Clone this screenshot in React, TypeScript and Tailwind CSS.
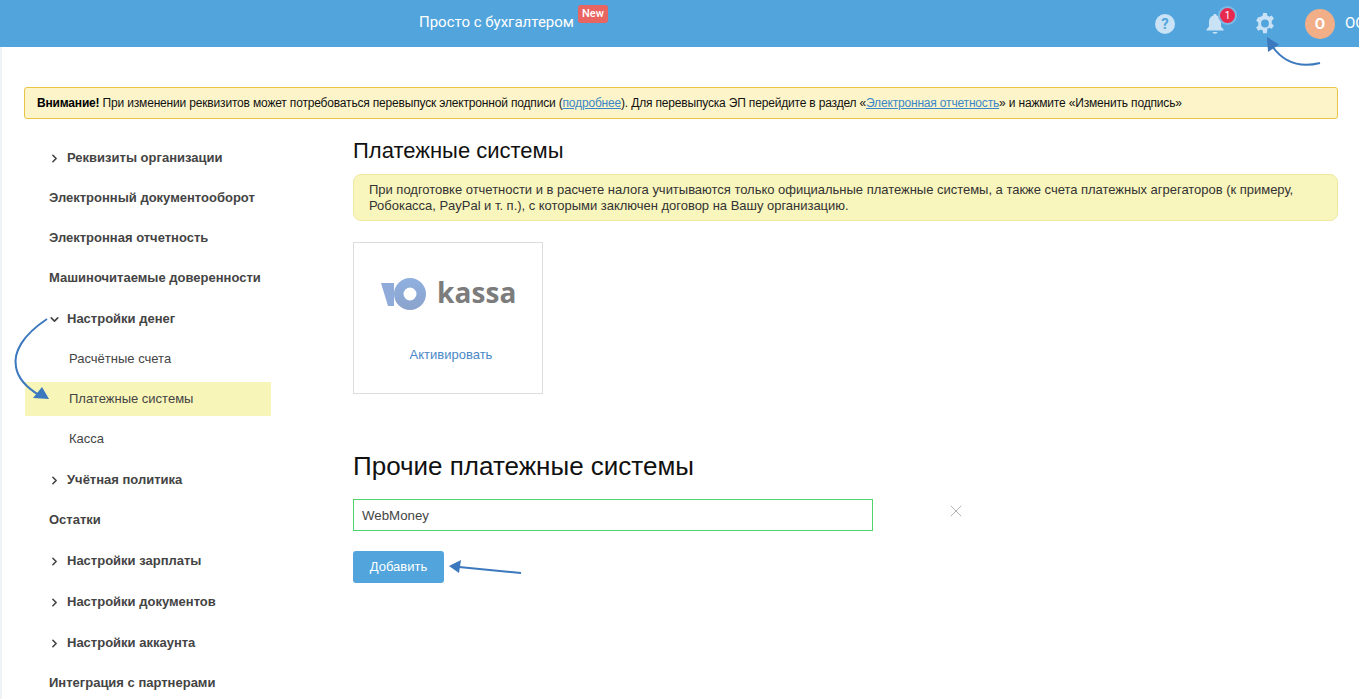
import React from 'react';
import { ChevronDown, ChevronRight, X } from 'lucide-react';

const FONT = "font-['Liberation_Sans',Arial,sans-serif]";

type MenuItem = { label: string; chevron?: 'right' | 'down'; sub?: boolean; active?: boolean; gapFix?: boolean };

const menu: MenuItem[] = [
  { label: 'Реквизиты организации', chevron: 'right' },
  { label: 'Электронный документооборот' },
  { label: 'Электронная отчетность' },
  { label: 'Машиночитаемые доверенности' },
  { label: 'Настройки денег', chevron: 'down', gapFix: true },
  { label: 'Расчётные счета', sub: true },
  { label: 'Платежные системы', sub: true, active: true },
  { label: 'Касса', sub: true },
  { label: 'Учётная политика', chevron: 'right', gapFix: true },
  { label: 'Остатки' },
  { label: 'Настройки зарплаты', chevron: 'right', gapFix: true },
  { label: 'Настройки документов', chevron: 'right', gapFix: true },
  { label: 'Настройки аккаунта', chevron: 'right', gapFix: true },
  { label: 'Интеграция с партнерами' },
];

const Header: React.FC = () => (
  <header className="h-[47px] bg-[#52a5dc] flex items-start shrink-0 overflow-hidden">
    <span className="ml-[419px] mt-[13px] font-['Roboto',sans-serif] text-[15px] leading-[18px] text-white">Просто с бухгалтером</span>
    <span className="ml-[4px] mt-[5px] h-[18px] w-[30px] rounded-[3px] bg-[#e86561] text-white text-[11px] leading-[18px] text-center font-['Roboto',sans-serif] font-medium">New</span>
    <div className="ml-auto h-full flex items-center">
      <svg width="22" height="22" viewBox="0 0 22 22" className="mr-[29px]">
        <circle cx="11" cy="11" r="10" fill="#c9e2f6" />
        <text x="11" y="16" textAnchor="middle" fontSize="15" fontWeight="700" fill="#52a5dc" fontFamily="Roboto, sans-serif">?</text>
      </svg>
      <div className="relative w-[20px] h-[24px] mr-[29px]">
        <svg width="20" height="24" viewBox="0 0 20 24" className="absolute left-0 top-0">
          <path d="M10 2c1 0 1.600.700 1.700 1.500C14.700 4.300 16 7 16 10v4.500l2.500 3v1H1.500v-1l2.500-3V10c0-3 1.300-5.700 4.300-6.500C8.400 2.700 9 2 10 2z" fill="#c9e2f6" />
          <path d="M7.500 20h5a2.500 1.800 0 0 1-5 0z" fill="#c9e2f6" />
        </svg>
        <span className="absolute left-[13px] -top-[6px] w-[19px] h-[19px] rounded-full bg-[#e8294f] border-2 border-[#7db9e4] text-white text-[10px] leading-[15px] text-center font-['Roboto',sans-serif]">1</span>
      </div>
      <svg width="22" height="22" viewBox="0 0 24 24" className="mr-[29px]">
        <path fill="#c9e2f6" fillRule="evenodd" d="M10 1h4l.600 3.100c.700.200 1.300.500 1.900.900l2.900-1.300 2.300 3.600-2.400 2.100c.100.400.100 1 .100 1.600s0 1.100-.100 1.600l2.400 2.100-2.300 3.600-2.900-1.300c-.600.400-1.200.700-1.900.900L14 23h-4l-.600-3.100c-.700-.200-1.300-.500-1.900-.900l-2.900 1.300-2.300-3.600 2.400-2.100C4.600 14.100 4.600 13.600 4.600 13s0-1.200.100-1.600L2.300 9.300l2.300-3.600L7.500 5c.600-.400 1.200-.700 1.900-.900L10 1zm2 7.200a4.300 4.300 0 1 0 0 8.600 4.300 4.300 0 0 0 0-8.600z" transform="translate(0 -1)" />
      </svg>
      <div className="w-[30px] h-[30px] rounded-full bg-[#f2ae87] text-white font-['Roboto',sans-serif] font-bold text-[15px] leading-[30px] text-center mr-[10px]">О</div>
      <span className="w-[14px] overflow-hidden font-['Roboto',sans-serif] text-[15px] text-white whitespace-nowrap">ООО</span>
    </div>
  </header>
);

const Alert: React.FC = () => (
  <div className={`ml-[22px] mr-[21px] mt-[40px] h-[32px] rounded-[3px] border border-[#e8c547] bg-[#fdf5c9] pl-[12px] flex items-center text-[12px] tracking-[-0.175px] text-[#111] whitespace-nowrap ${FONT}`}>
    <b className="text-black">Внимание!</b>
    <span className="whitespace-pre"> При изменении реквизитов может потребоваться перевыпуск электронной подписи (</span>
    <span className="text-[#3a87c8] underline">подробнее</span>
    <span className="whitespace-pre">). Для перевыпуска ЭП перейдите в раздел «</span>
    <span className="text-[#3a87c8] underline">Электронная отчетность</span>
    <span className="whitespace-pre">» и нажмите «Изменить подпись»</span>
  </div>
);

const Sidebar: React.FC = () => (
  <nav className={`w-[246px] ml-[23px] mt-[1px] shrink-0 flex flex-col gap-[6px] ${FONT}`}>
    {menu.map((item) => (
      <div
        key={item.label}
        className={`h-[34px] shrink-0 flex items-center text-[13px] text-[#444] ${item.gapFix ? 'mt-[1px]' : ''} ${item.active ? 'bg-[#f8f5b8]' : ''} ${item.sub ? 'pl-[44px]' : 'pl-[24px] font-bold'}`}
      >
        {item.chevron === 'right' && <ChevronRight size={13} strokeWidth={3} className="-ml-[1px] mr-[6px] text-[#444]" />}
        {item.chevron === 'down' && <ChevronDown size={13} strokeWidth={3} className="-ml-[1px] mr-[6px] text-[#444]" />}
        {item.label}
      </div>
    ))}
  </nav>
);

const KassaCard: React.FC = () => (
  <div className="mt-[21px] w-[190px] h-[152px] border border-[#dcdcdc] flex flex-col items-center">
    <div className="mt-[35px] flex items-center h-[32px] w-[134px]">
      <svg width="45" height="32" viewBox="0 0 45 32" className="shrink-0">
        <defs>
          <linearGradient id="yk" x1="0" y1="0" x2="0" y2="1">
            <stop offset="0" stopColor="#8fb0e0" />
            <stop offset="1" stopColor="#8ba3cc" />
          </linearGradient>
        </defs>
        <path d="M0 5h13v23H7z" fill="#8fabd9" />
        <path fillRule="evenodd" d="M29 0a16 16 0 1 1 0 32 16 16 0 0 1 0-32zm0 9.500a6.500 6.500 0 1 0 0 13 6.500 6.500 0 0 0 0-13z" fill="url(#yk)" />
      </svg>
      <span className="ml-[11px] mb-[4px] font-['Open_Sans',sans-serif] font-bold text-[28px] leading-[32px] text-[#7c7c7c] tracking-[0.1px]">kassa</span>
    </div>
    <span className="mt-[37px] ml-[6px] text-[13px] leading-[16px] text-[#4a88c7]">Активировать</span>
  </div>
);

const Content: React.FC = () => (
  <main className={`ml-[82px] w-[985px] ${FONT}`}>
    <h2 className="text-[22px] leading-[24px] text-[#111] -mt-[1px]">Платежные системы</h2>
    <div className="mt-[11px] h-[47px] rounded-[8px] border border-[#efe9a0] bg-[#f9f6bd] pl-[15px] pr-[20px] pt-[7px] text-[13px] tracking-[-0.02px] leading-[16px] text-[#333]">
      При подготовке отчетности и в расчете налога учитываются только официальные платежные системы, а также счета платежных агрегаторов (к примеру, Робокасса, PayPal и т. п.), с которыми заключен договор на Вашу организацию.
    </div>
    <KassaCard />
    <h2 className="mt-[57px] text-[26px] leading-[30px] text-[#111]">Прочие платежные системы</h2>
    <div className="mt-[18px] flex items-center">
      <div className="w-[520px] h-[32px] border border-[#4fd36a] pl-[8px] pt-[2px] flex items-center text-[13.3px] text-[#444]">WebMoney</div>
      <X size={20} strokeWidth={1.2} className="ml-[73px] -mt-[8px] text-[#b4b4b4]" />
    </div>
    <button className="mt-[20px] block w-[91px] h-[32px] rounded-[3px] bg-[#52a5dc] text-white text-[13px]">Добавить</button>
  </main>
);

const Annotations: React.FC = () => (
  <svg width="1359" height="699" viewBox="0 0 1359 699" className="absolute left-0 top-0 pointer-events-none" fill="none">
    <path d="M1320 63C1300 68 1284 63 1272 46" stroke="#3b78bd" strokeWidth="2" />
    <path d="M1267 37l12 7.500-11 7.500z" fill="#3b78bd" />
    <path d="M47 319C23 335 13 352 16 367c2 12 13 22 23 28" stroke="#3b78bd" strokeWidth="2" />
    <path d="M49 399l-16-1 9-11z" fill="#3b78bd" />
    <path d="M521 573l-62-6" stroke="#3b78bd" strokeWidth="2" />
    <path d="M449 566l12-6-2 13z" fill="#3b78bd" />
  </svg>
);

const App: React.FC = () => (
  <div className="relative w-[1359px] h-[699px] overflow-hidden bg-white flex flex-col">
    <Header />
    <div className="flex-1 min-h-0 border-l-2 border-l-[#eef3f7]">
      <Alert />
      <div className="flex mt-[21px]">
        <Sidebar />
        <Content />
      </div>
    </div>
    <Annotations />
  </div>
);

export default App;
